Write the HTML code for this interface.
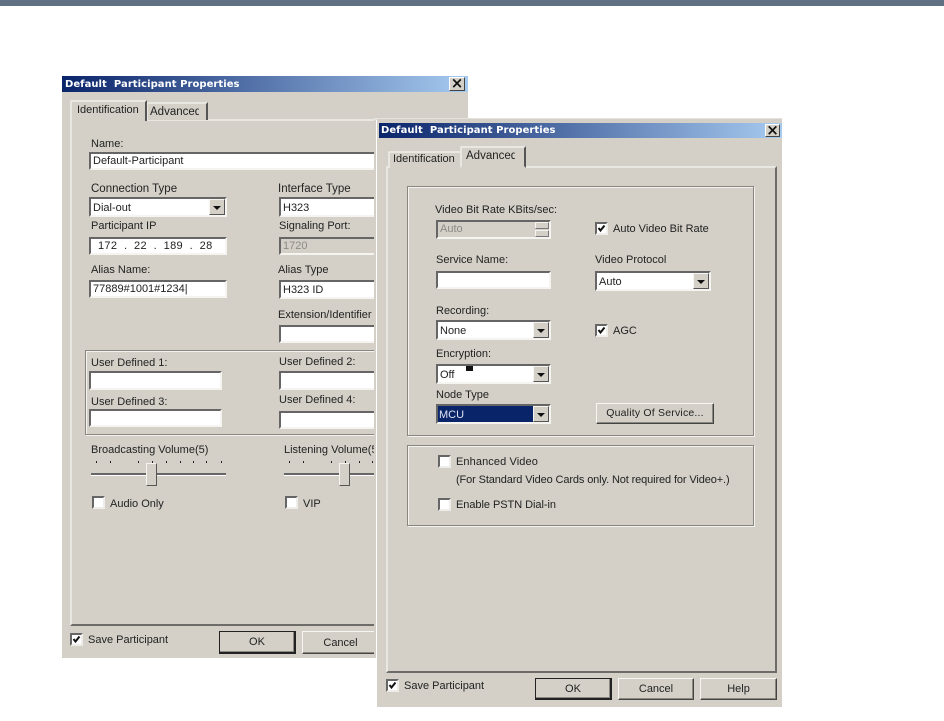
<!DOCTYPE html>
<html><head><meta charset="utf-8"><style>
html,body{margin:0;padding:0;background:#fff}
body{width:944px;height:721px;position:relative;overflow:hidden;font:11px/14px "Liberation Sans",sans-serif;color:#222}
div,span.t{position:absolute;box-sizing:border-box}
.t{white-space:nowrap;filter:blur(.3px);line-height:14px;margin-top:1px}
.dlg{background:#d4d0c8}
.title{background:linear-gradient(90deg,#0a246a,#a6caf0);color:#fff;font:bold 10px/17px "DejaVu Sans",sans-serif;letter-spacing:.05px;padding-left:3px;white-space:pre}
.x{background:#d4d0c8;border:1px solid;border-color:#fff #444 #444 #fff;text-align:center;font:bold 15px/11px "DejaVu Sans",sans-serif;color:#111}
.page{border:2px solid;border-color:#e9e7e2 #6d6c68 #6d6c68 #e9e7e2}
.tab{background:#d4d0c8;border-top:2px solid #e9e7e2;border-left:2px solid #e9e7e2;border-right:2px solid #555;border-top-left-radius:2px}
.in{background:#fff;border:2px solid;border-color:#666 #f5f4f1 #f5f4f1 #666;padding-left:2px;line-height:15px;white-space:nowrap;color:#222;overflow:hidden}
.sel{line-height:18px}
.dis{background:#d4d0c8;color:#8c8a85}
.arr{right:0;top:0;bottom:0;width:16px;background:#d4d0c8;border:1px solid;border-color:#f5f4f1 #555 #555 #f5f4f1}
.arr:after{content:"";position:absolute;left:3px;top:6px;border:4px solid transparent;border-top:4px solid #111;border-bottom:0}
.cb{width:13px;height:13px;background:#fff;border:2px solid;border-color:#666 #eeede9 #eeede9 #666}
.cb svg{position:absolute;left:0;top:0}
.btn{background:#d4d0c8;border:1px solid;border-color:#f7f6f3 #444 #444 #f7f6f3;box-shadow:inset -1px -1px 0 #8a8880;text-align:center;line-height:22px;color:#222}
.def{border:1px solid #222;border-right-width:2px;border-bottom-width:2px;line-height:21px;box-shadow:inset -1px -1px 0 #8a8880}
.grp{border:1px solid #88867f;box-shadow:inset 1px 1px 0 #f4f3f0,1px 1px 0 #f4f3f0}
.tick{width:1px;height:2px;background:#222}
.track{height:3px;background:#666;border-bottom:1px solid #fff}
.thumb{width:11px;height:23px;background:#d4d0c8;border:1px solid;border-color:#f5f4f1 #555 #555 #f5f4f1}
</style></head><body>
<div style="left:0;top:0;width:944px;height:6px;background:#5f7183"></div>

<!-- LEFT DIALOG -->
<div class="dlg" style="left:62px;top:76px;width:406px;height:582px"></div>
<div class="title" style="left:62px;top:76px;width:406px;height:16px">Default  Participant Properties</div>
<div class="x" style="left:449px;top:77px;width:16px;height:14px">×</div>
<div class="page" style="left:70px;top:119px;width:390px;height:507px"></div>
<div class="tab" style="left:70px;top:100px;width:77px;height:21px"></div>
<div class="tab" style="left:147px;top:102px;width:61px;height:18px;border-left:1px solid #e9e7e2"></div>
<span class="t" style="left:77px;top:102px">Identification</span>
<span class="t" style="left:150px;top:104px;font-size:11.5px">Advanced</span>
<div class="dlg" style="left:199px;top:104px;width:3px;height:14px"></div>

<span class="t" style="left:91px;top:136px">Name:</span>
<div class="in" style="left:89px;top:152px;width:290px;height:18px">Default-Participant</div>
<span class="t" style="left:91px;top:181px;font-size:11.5px">Connection Type</span>
<div class="in sel" style="left:89px;top:197px;width:138px;height:20px">Dial-out<div class="arr"></div></div>
<span class="t" style="left:278px;top:181px;font-size:11.5px">Interface Type</span>
<div class="in sel" style="left:279px;top:197px;width:100px;height:20px">H323</div>
<span class="t" style="left:91px;top:218px">Participant IP</span>
<span class="t" style="left:279px;top:218px">Signaling Port:</span>
<div class="in" style="left:89px;top:237px;width:138px;height:18px;padding-left:7px;white-space:pre;line-height:14px;letter-spacing:.3px">172  .  22  .  189  .  28</div>
<div class="in dis" style="left:279px;top:237px;width:100px;height:18px;line-height:14px">1720</div>
<span class="t" style="left:91px;top:262px">Alias Name:</span>
<span class="t" style="left:278px;top:262px">Alias Type</span>
<div class="in" style="left:89px;top:280px;width:138px;height:18px;line-height:14px">77889#1001#1234|</div>
<div class="in sel" style="left:279px;top:280px;width:100px;height:19px;line-height:16px">H323 ID</div>
<span class="t" style="left:278px;top:307px">Extension/Identifier</span>
<div class="in" style="left:279px;top:325px;width:100px;height:18px"></div>
<div class="grp" style="left:85px;top:350px;width:300px;height:85px"></div>
<span class="t" style="left:91px;top:355px">User Defined 1:</span>
<span class="t" style="left:279px;top:354px">User Defined 2:</span>
<div class="in" style="left:89px;top:371px;width:133px;height:19px"></div>
<div class="in" style="left:279px;top:371px;width:100px;height:19px"></div>
<span class="t" style="left:91px;top:394px">User Defined 3:</span>
<span class="t" style="left:279px;top:392px">User Defined 4:</span>
<div class="in" style="left:89px;top:409px;width:133px;height:18px"></div>
<div class="in" style="left:279px;top:411px;width:100px;height:18px"></div>
<span class="t" style="left:91px;top:442px">Broadcasting Volume(5)</span>
<span class="t" style="left:284px;top:442px">Listening Volume(5)</span>
<div class="tick" style="left:96px;top:461px"></div><div class="tick" style="left:110px;top:461px"></div><div class="tick" style="left:138px;top:461px"></div><div class="tick" style="left:152px;top:461px"></div><div class="tick" style="left:166px;top:461px"></div><div class="tick" style="left:180px;top:461px"></div><div class="tick" style="left:193px;top:461px"></div><div class="tick" style="left:206px;top:461px"></div><div class="tick" style="left:221px;top:461px"></div>
<div class="tick" style="left:289px;top:461px"></div><div class="tick" style="left:303px;top:461px"></div><div class="tick" style="left:331px;top:461px"></div><div class="tick" style="left:345px;top:461px"></div><div class="tick" style="left:359px;top:461px"></div><div class="tick" style="left:372px;top:461px"></div>
<div class="track" style="left:91px;top:473px;width:135px"></div>
<div class="thumb" style="left:146px;top:463px"></div>
<div class="track" style="left:284px;top:473px;width:95px"></div>
<div class="thumb" style="left:339px;top:463px"></div>
<div class="cb" style="left:92px;top:496px"></div>
<span class="t" style="left:110px;top:496px">Audio Only</span>
<div class="cb" style="left:285px;top:496px"></div>
<span class="t" style="left:303px;top:496px">VIP</span>
<div class="cb" style="left:70px;top:633px"><svg width="9" height="9"><path d="M1.5 4l2 2.5 4-5" fill="none" stroke="#111" stroke-width="2"/></svg></div>
<span class="t" style="left:88px;top:632px;letter-spacing:0">Save Participant</span>
<div class="btn def" style="left:219px;top:631px;width:77px;height:23px">OK</div>
<div class="btn" style="left:302px;top:631px;width:77px;height:23px">Cancel</div>

<!-- RIGHT DIALOG -->
<div class="dlg" style="left:374px;top:119px;width:2px;height:539px"></div>
<div style="left:374px;top:118px;width:408px;height:2px;background:#e4e2dc"></div>
<div style="left:376px;top:120px;width:1px;height:587px;background:#fff"></div>
<div class="dlg" style="left:377px;top:119px;width:405px;height:588px"></div>
<div class="title" style="left:379px;top:123px;width:403px;height:15px;line-height:15px;padding-left:2px">Default  Participant Properties</div>
<div class="x" style="left:765px;top:124px;width:15px;height:13px;line-height:10px">×</div>
<div class="page" style="left:386px;top:166px;width:391px;height:507px"></div>
<div class="tab" style="left:388px;top:151px;width:72px;height:17px;border-right:0"></div>
<div class="tab" style="left:460px;top:146px;width:66px;height:22px;border-bottom:2px solid #d4d0c8"></div>
<span class="t" style="left:393px;top:151px">Identification</span>
<span class="t" style="left:466px;top:148px;font-size:11.5px">Advanced</span>
<div class="dlg" style="left:515px;top:150px;width:3px;height:14px"></div>

<div class="grp" style="left:407px;top:186px;width:347px;height:250px"></div>
<span class="t" style="left:435px;top:202px">Video Bit Rate KBits/sec:</span>
<div class="in dis" style="left:436px;top:220px;width:115px;height:19px;line-height:14px">Auto
  <div style="right:0;top:0;width:14px;height:7px;border:1px solid;border-color:#f5f4f1 #777 #777 #f5f4f1"></div>
  <div style="right:0;top:8px;width:14px;height:7px;border:1px solid;border-color:#f5f4f1 #777 #777 #f5f4f1"></div>
</div>
<div class="cb" style="left:595px;top:222px"><svg width="9" height="9"><path d="M1.5 4l2 2.5 4-5" fill="none" stroke="#111" stroke-width="2"/></svg></div>
<span class="t" style="left:613px;top:221px">Auto Video Bit Rate</span>
<span class="t" style="left:436px;top:252px">Service Name:</span>
<div class="in" style="left:436px;top:271px;width:115px;height:18px"></div>
<span class="t" style="left:595px;top:252px">Video Protocol</span>
<div class="in sel" style="left:595px;top:271px;width:116px;height:20px">Auto<div class="arr"></div></div>
<span class="t" style="left:436px;top:303px">Recording:</span>
<div class="in sel" style="left:436px;top:320px;width:115px;height:20px;line-height:19px">None<div class="arr"></div></div>
<div class="cb" style="left:595px;top:324px"><svg width="9" height="9"><path d="M1.5 4l2 2.5 4-5" fill="none" stroke="#111" stroke-width="2"/></svg></div>
<span class="t" style="left:613px;top:323px">AGC</span>
<span class="t" style="left:436px;top:346px">Encryption:</span>
<div class="in sel" style="left:436px;top:364px;width:115px;height:20px">Off<div class="arr"></div></div>
<div style="left:466px;top:366px;width:7px;height:5px;background:#111"></div>
<span class="t" style="left:436px;top:387px">Node Type</span>
<div class="in" style="left:436px;top:404px;width:115px;height:20px"><div class="arr"></div></div>
<div style="left:438px;top:406px;width:95px;height:16px;background:#0a246a"></div>
<span class="t" style="left:439px;top:407px;color:#dfe3f0">MCU</span>
<div class="btn" style="left:596px;top:403px;width:118px;height:21px;line-height:19px;font-size:10.5px;letter-spacing:.2px">Quality Of Service...</div>

<div class="grp" style="left:407px;top:445px;width:347px;height:81px"></div>
<div class="cb" style="left:438px;top:455px"></div>
<span class="t" style="left:456px;top:454px;letter-spacing:.1px">Enhanced Video</span>
<span class="t" style="left:456px;top:472px;letter-spacing:-.12px">(For Standard Video Cards only. Not required for Video+.)</span>
<div class="cb" style="left:438px;top:498px"></div>
<span class="t" style="left:456px;top:497px;letter-spacing:-.05px">Enable PSTN Dial-in</span>

<div class="cb" style="left:386px;top:679px"><svg width="9" height="9"><path d="M1.5 4l2 2.5 4-5" fill="none" stroke="#111" stroke-width="2"/></svg></div>
<span class="t" style="left:404px;top:678px;letter-spacing:0">Save Participant</span>
<div class="btn def" style="left:535px;top:678px;width:77px;height:22px;line-height:20px">OK</div>
<div class="btn" style="left:618px;top:678px;width:76px;height:22px;line-height:21px">Cancel</div>
<div class="btn" style="left:700px;top:678px;width:77px;height:22px;line-height:21px">Help</div>
</body></html>
